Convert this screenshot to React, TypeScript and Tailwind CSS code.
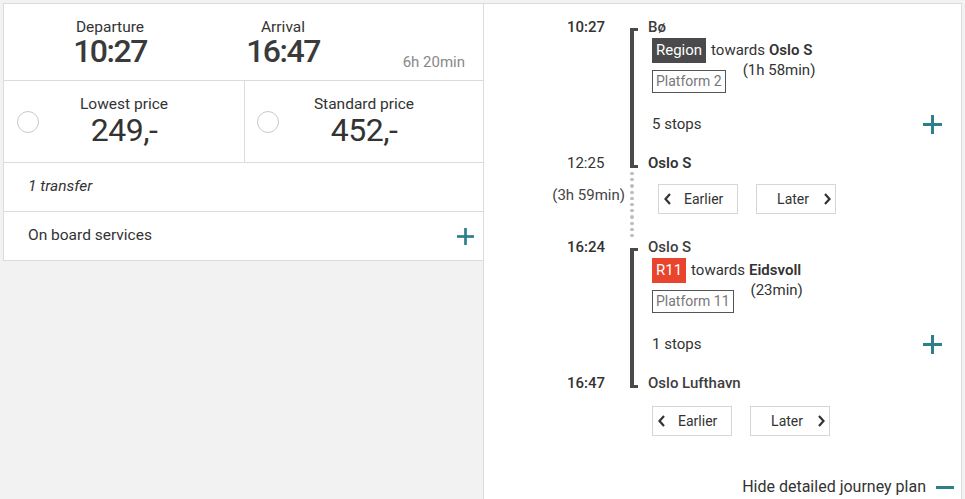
const font = { fontFamily: "Roboto, 'Open Sans', sans-serif" };

const PlusIcon = ({ size = 19 }: { size?: number }) => (
  <svg width={size} height={size} viewBox="0 0 19 19">
    <rect x="8" y="0" width="3" height="19" fill="#2d7f8b" />
    <rect x="0" y="8" width="19" height="3" fill="#2d7f8b" />
  </svg>
);

const Chevron = ({ dir }: { dir: "left" | "right" }) => (
  <svg width="7" height="12" viewBox="0 0 7 12">
    <polyline
      points={dir === "left" ? "6,1 1.5,6 6,11" : "1,1 5.5,6 1,11"}
      fill="none"
      stroke="#333"
      strokeWidth="2.2"
    />
  </svg>
);

const Radio = () => <div className="w-[22px] h-[22px] shrink-0 rounded-full border border-[#c9c9c9] bg-white" />;

const NavButtons = ({ offset }: { offset: string }) => (
  <div className={`flex gap-[18px] ${offset}`}>
    <button className="w-[80px] h-[30px] border border-[#d6d6d6] bg-white flex items-center pl-[5px] text-[14px] text-[#333]">
      <Chevron dir="left" />
      <span className="ml-[13px]">Earlier</span>
    </button>
    <button className="w-[80px] h-[30px] border border-[#d6d6d6] bg-white flex items-center justify-end pr-[4px] text-[14px] text-[#333]">
      <span className="mr-[15px]">Later</span>
      <Chevron dir="right" />
    </button>
  </div>
);

type Leg = {
  from: string;
  fromTime: string;
  to: string;
  toTime: string;
  toBold: boolean;
  line: string;
  lineBg: string;
  towards: string;
  duration: string;
  platform: string;
  stops: string;
};

const legs: Leg[] = [
  { from: "Bø", fromTime: "10:27", to: "Oslo S", toTime: "12:25", toBold: true, line: "Region", lineBg: "bg-[#4a4a4c]", towards: "Oslo S", duration: "(1h 58min)", platform: "Platform 2", stops: "5 stops" },
  { from: "Oslo S", fromTime: "16:24", to: "Oslo Lufthavn", toTime: "16:47", toBold: false, line: "R11", lineBg: "bg-[#e8442e]", towards: "Eidsvoll", duration: "(23min)", platform: "Platform 11", stops: "1 stops" },
];

const LegRow = ({ leg }: { leg: Leg }) => (
  <div className="flex">
    <div className="w-[141px] shrink-0 pl-[83px] flex flex-col justify-between text-[15px] leading-[20px] text-[#333]">
      <div className="font-medium">{leg.fromTime}</div>
      <div className={leg.toBold ? "" : "font-medium"}>{leg.toTime}</div>
    </div>
    <div className="ml-[5px] mt-[11px] mb-[5px] w-[8px] shrink-0 border-l-4 border-y-[3px] border-[#4a4a4c]" />
    <div className="ml-[10px] flex-1 pr-[19px] text-[15px] text-[#333]">
      <div className="leading-[20px] h-[20px] font-medium text-[#3d3d3d]">{leg.from}</div>
      <div className="mt-[1px] h-[25px] flex items-center ml-[4px]">
        <span className={`${leg.lineBg} text-white px-[4px] leading-[25px] h-[25px]`}>{leg.line}</span>
        <span className="ml-[5px]">towards</span>
        <span className="ml-[4px] font-semibold">{leg.towards}</span>
      </div>
      <div className="h-[30px] flex items-start ml-[4px]">
        <span className="mt-[7px] h-[23px] border border-[#555] px-[3px] leading-[21px] text-[#777] text-[14px]">{leg.platform}</span>
        <span className="ml-[17px] -mt-[2px] leading-[18px]">{leg.duration}</span>
      </div>
      <div className="mt-[21px] h-[20px] flex items-center justify-between ml-[4px]">
        <span className="leading-[20px]">{leg.stops}</span>
        <PlusIcon />
      </div>
      <div className={`mt-[19px] h-[20px] leading-[20px] ${leg.toBold ? "font-semibold" : "font-medium text-[#3d3d3d]"}`}>{leg.to}</div>
    </div>
  </div>
);

const TransferRow = () => (
  <div className="flex h-[64px]">
    <div className="w-[141px] shrink-0 text-right pt-[12px] text-[15px] leading-[20px] text-[#444]">(3h 59min)</div>
    <div className="ml-[5px] -mt-[1px] w-[8px] shrink-0 flex flex-col gap-[3px]">
      {Array.from({ length: 11 }).map((_, i) => (
        <div key={i} className="w-[4px] h-[4px] rounded-full bg-[#bdbdbd]" />
      ))}
    </div>
    <div className="ml-[10px] pt-[11px]">
      <NavButtons offset="ml-[10px]" />
    </div>
  </div>
);

export default function App() {
  return (
    <div className="w-[965px] h-[499px] bg-[#f2f2f2] pt-[3px] px-[3px] overflow-hidden" style={font}>
      <div className="flex h-full border-t border-[#dcdcdc]">
        {/* Summary card */}
        <div className="w-[480px] shrink-0 self-start bg-white border-l border-b border-[#dcdcdc] text-[#333]">
          <div className="h-[77px] border-b border-[#dcdcdc] flex items-start">
            <div className="ml-[36px] w-[140px] text-center pt-[13px]">
              <div className="text-[15.5px] leading-[20px]">Departure</div>
              <div className="text-[32px] leading-[28px] font-medium tracking-[-1.5px] text-[#3a3a3a]">10:27</div>
            </div>
            <div className="ml-[33px] w-[140px] text-center pt-[13px]">
              <div className="text-[15.5px] leading-[20px]">Arrival</div>
              <div className="text-[32px] leading-[28px] font-medium tracking-[-1.5px] text-[#3a3a3a]">16:47</div>
            </div>
            <div className="flex-1 text-right pr-[18px] pt-[48px] text-[15px] leading-[20px] text-[#888]">6h 20min</div>
          </div>
          <div className="h-[82px] border-b border-[#dcdcdc] flex">
            <div className="w-[241px] border-r border-[#dcdcdc] flex items-center px-[13px]">
              <Radio />
              <div className="flex-1 text-center pb-[5px]">
                <div className="text-[15.5px] leading-[20px]">Lowest price</div>
                <div className="mt-[2px] text-[32px] leading-[28px] tracking-[-0.5px]">249,-</div>
              </div>
              <div className="w-[22px]" />
            </div>
            <div className="flex-1 flex items-center px-[12px]">
              <Radio />
              <div className="flex-1 text-center pb-[5px]">
                <div className="text-[15.5px] leading-[20px]">Standard price</div>
                <div className="mt-[2px] text-[32px] leading-[28px] tracking-[-0.5px]">452,-</div>
              </div>
              <div className="w-[22px]" />
            </div>
          </div>
          <div className="h-[49px] border-b border-[#dcdcdc] flex items-center pl-[24px] text-[15.5px] italic">1 transfer</div>
          <div className="h-[48px] flex items-center justify-between pl-[24px] pr-[9px] text-[15.5px]">
            <span>On board services</span>
            <PlusIcon size={17} />
          </div>
        </div>

        {/* Journey plan */}
        <div className="flex-1 bg-white border-l border-r border-[#dcdcdc] pt-[13px] flex flex-col">
          <LegRow leg={legs[0]} />
          <TransferRow />
          <LegRow leg={legs[1]} />
          <div className="flex mt-[13px]">
            <div className="w-[164px] shrink-0" />
            <NavButtons offset="ml-[4px]" />
          </div>
          <div className="mt-[41px] flex items-center justify-end pr-[7px] text-[16px] leading-[20px] text-[#333]">
            <span>Hide detailed journey plan</span>
            <span className="ml-[10px] w-[18px] h-[3px] bg-[#2d7f8b]" />
          </div>
        </div>
      </div>
    </div>
  );
}
